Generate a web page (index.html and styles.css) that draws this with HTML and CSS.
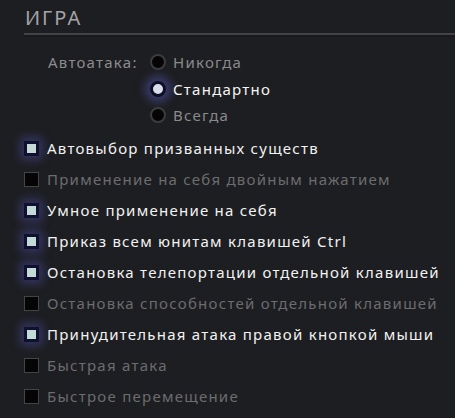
FILE: index.html
```html
<!DOCTYPE html>
<html lang="ru">
<head>
  <meta charset="UTF-8">
  <title>Игра</title>
  <link rel="stylesheet" href="styles.css">
</head>
<body>

  <div class="panel">
    <h1 class="title">ИГРА</h1>

    <div class="autoattack">
      <span class="aa-label">Автоатака:</span>
      <div class="radios">
        <div class="radio"><span class="dot"></span>Никогда</div>
        <div class="radio on"><span class="dot"></span>Стандартно</div>
        <div class="radio"><span class="dot"></span>Всегда</div>
      </div>
    </div>

    <div class="options">
      <div class="opt on"><span class="box"></span>Автовыбор призванных существ</div>
      <div class="opt"><span class="box"></span>Применение на себя двойным нажатием</div>
      <div class="opt on"><span class="box"></span>Умное применение на себя</div>
      <div class="opt on"><span class="box"></span>Приказ всем юнитам клавишей Ctrl</div>
      <div class="opt on"><span class="box"></span>Остановка телепортации отдельной клавишей</div>
      <div class="opt"><span class="box"></span>Остановка способностей отдельной клавишей</div>
      <div class="opt on"><span class="box"></span>Принудительная атака правой кнопкой мыши</div>
      <div class="opt"><span class="box"></span>Быстрая атака</div>
      <div class="opt"><span class="box"></span>Быстрое перемещение</div>
    </div>
  </div>

</body>
</html>
```

FILE: styles.css
```css
body {
  background-color: #1d1e21;
  color: #e6e6e6;
  font-family: "Noto Sans", sans-serif;
  margin: 0;
  padding: 0;
  overflow: hidden;
}

.panel {
  padding: 4px 0 0 24px;
}

.title {
  margin: 0;
  padding-left: 1px;
  height: 29px;
  font-size: 20px;
  font-weight: 400;
  letter-spacing: 2px;
  color: #a4a4a6;
  line-height: 28px;
  border-bottom: 2px solid #424246;
  box-shadow: 0 2px 0 #18191b;
}

.autoattack {
  display: flex;
  margin-top: 14px;
}

.aa-label {
  width: 126px;
  padding-left: 24px;
  box-sizing: border-box;
  color: #8c8c8e;
  font-size: 15px;
  letter-spacing: 1.25px;
  line-height: 26px;
}

.radios {
  display: flex;
  flex-direction: column;
}

.radio {
  display: flex;
  align-items: center;
  height: 26.5px;
  font-size: 15px;
  letter-spacing: 1.25px;
  color: #8a8a8c;
}

.radio .dot {
  width: 12px;
  height: 12px;
  border-radius: 50%;
  border: 2px solid #3c3c3e;
  background-color: #050506;
  margin-right: 7px;
}

.radio.on {
  color: #f4f4f4;
}

.radio.on .dot {
  border: 3px solid #0e0e24;
  width: 10px;
  height: 10px;
  background-color: #d8dcec;
  box-shadow: 0 0 10px 5px rgba(90, 90, 190, 0.5);
}

.options {
  margin-top: 4px;
}

.opt {
  display: flex;
  align-items: center;
  height: 31px;
  font-size: 15px;
  letter-spacing: 1.25px;
  color: #6c6c6e;
}

.opt .box {
  width: 13px;
  height: 13px;
  border: 1px solid #444446;
  background-color: #050506;
  margin-right: 8px;
  flex-shrink: 0;
}

.opt.on {
  color: #f2f2f2;
}

.opt.on .box {
  width: 9px;
  height: 9px;
  border: 3px solid #101030;
  background-color: #c4dad6;
  box-shadow: 0 0 10px 4px rgba(80, 80, 170, 0.45);
}
```
